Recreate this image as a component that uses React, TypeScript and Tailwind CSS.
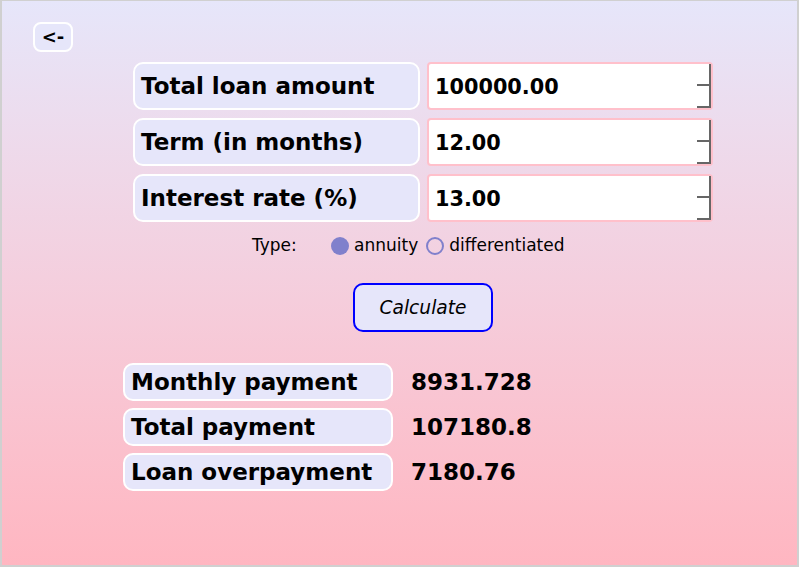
import React from "react";

interface IField {
  label: string;
  value: string;
}

const fields: IField[] = [
  { label: "Total loan amount", value: "100000.00" },
  { label: "Term (in months)", value: "12.00" },
  { label: "Interest rate (%)", value: "13.00" },
];

const results: IField[] = [
  { label: "Monthly payment", value: "8931.728" },
  { label: "Total payment", value: "107180.8" },
  { label: "Loan overpayment", value: "7180.76" },
];

const font = "font-['DejaVu_Sans',sans-serif]";

const App: React.FC = () => {
  return (
    <div
      className={`${font} h-[567px] w-full border-t border-b-2 border-x-2 border-[#d0d0d0] bg-gradient-to-b from-[#e6e6fa] to-[#ffb6c1] text-black`}
    >
      <div className="pt-[21px] pl-[31px]">
        <button className="h-[30px] w-[40px] rounded-[8px] border-2 border-white bg-[#e6e6fa] text-[18px] font-bold leading-none">
          &lt;-
        </button>
      </div>

      <div className="mt-[10px] ml-[131px] flex flex-col gap-[8px]">
        {fields.map((item: IField, _idx: number) => (
          <div key={_idx} className="flex gap-[7px]">
            <div className="flex h-[48px] w-[287px] items-center rounded-[10px] border-2 border-white bg-[#e6e6fa] pl-[6px] pt-[1px] text-[23px] font-bold">
              {item.label}
            </div>
            <div className="relative h-[48px] w-[286px] rounded-[4px] border-2 border-[#ffc0cb] bg-white">
              <input
                type="text"
                readOnly
                value={item.value}
                className="h-full w-full bg-transparent pl-[6px] pt-[2px] text-[20.8px] font-bold outline-none"
              />
              <div className="absolute right-0 top-0 bottom-0 flex w-[14px] flex-col border-r-2 border-[#666]">
                <div className="flex-1 border-b-2 border-[#666]" />
                <div className="flex-1 border-b-2 border-[#666]" />
              </div>
            </div>
          </div>
        ))}
      </div>

      <div className="mt-[14px] ml-[250px] flex h-[20px] items-center text-[17px]">
        <span className="w-[79px]">Type:</span>
        <span className="h-[18px] w-[18px] rounded-full bg-[#8080cc]" />
        <span className="ml-[5px]">annuity</span>
        <span className="ml-[8px] h-[18px] w-[18px] rounded-full border-2 border-[#8080cc]" />
        <span className="ml-[5px]">differentiated</span>
      </div>

      <div className="mt-[27px] ml-[351px]">
        <button className="h-[49px] w-[140px] rounded-[10px] border-2 border-[#0000ff] bg-[#e6e6fa] text-[18.6px] italic">
          Calculate
        </button>
      </div>

      <div className="mt-[31px] ml-[121px] flex flex-col gap-[7px]">
        {results.map((item: IField, _idx: number) => (
          <div key={_idx} className="flex items-center">
            <div className="flex h-[38px] w-[270px] items-center rounded-[10px] border-2 border-white bg-[#e6e6fa] pl-[6px] text-[23px] font-bold">
              {item.label}
            </div>
            <span className="ml-[18px] text-[23px] font-bold">{item.value}</span>
          </div>
        ))}
      </div>
    </div>
  );
};

export default App;
